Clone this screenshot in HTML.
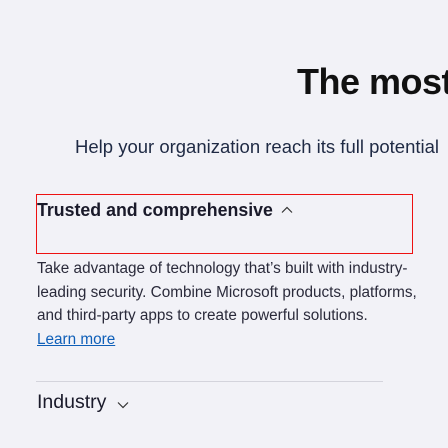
<!DOCTYPE html>
<html><head><style>
body{margin:0;width:448px;height:448px;overflow:hidden;background:#f2f2f7;font-family:"Liberation Sans",sans-serif;position:relative}
div,p,a{position:absolute;white-space:nowrap;margin:0}
</style></head><body>
<div style="left:297px;top:61px;font-size:36px;font-weight:bold;color:#111;letter-spacing:-0.5px">The most</div>
<div style="left:75px;top:136px;font-size:18.5px;color:#1f2a44">Help your organization reach its full potential</div>
<div style="left:36px;top:194px;width:375px;height:58px;border:1px solid #ee1111"></div>
<div style="left:37px;top:199px;font-size:18.5px;font-weight:bold;color:#1a1a2a;transform:scaleX(0.96);transform-origin:0 0">Trusted and comprehensive</div>
<svg style="position:absolute;left:281px;top:206px" width="12" height="8" viewBox="0 0 12 8"><path d="M1 6.5L6 1.5L11 6.5" fill="none" stroke="#333" stroke-width="1.2"/></svg>
<div style="left:37px;top:257px;font-size:15.3px;line-height:23.5px;color:#2a2a3a;letter-spacing:0">Take advantage of technology that’s built with industry-<br>leading security. Combine Microsoft products, platforms,<br>and third-party apps to create powerful solutions.<br><span style="color:#0f5fb8;text-decoration:underline">Learn more</span></div>
<div style="left:36px;top:381px;width:347px;height:1px;background:#d4d4dc"></div>
<div style="left:37px;top:391px;font-size:19.5px;color:#1a1a2a">Industry</div>
<svg style="position:absolute;left:117px;top:401px" width="12" height="8" viewBox="0 0 12 8"><path d="M1 1.5L6 6.5L11 1.5" fill="none" stroke="#333" stroke-width="1.2"/></svg>
</body></html>
